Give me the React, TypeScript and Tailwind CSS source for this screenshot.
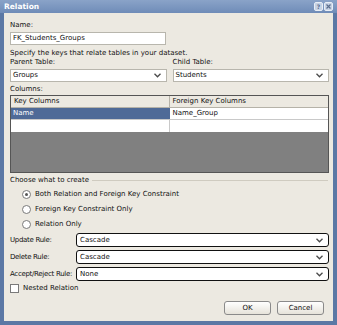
import React from 'react';

const Chevron = () => (
  <svg width="7" height="5" viewBox="0 0 7 5" className="shrink-0">
    <path d="M0.5 0.8 L3.5 3.8 L6.5 0.8" fill="none" stroke="#4a4a4a" strokeWidth="1.3" />
  </svg>
);

const Select = ({ value, className }: { value: string; className: string }) => (
  <div className={`flex items-center justify-between bg-white border border-[#b8b6ad] pl-[2px] pr-[5px] ${className}`}>
    <span>{value}</span>
    <Chevron />
  </div>
);

const RuleSelect = ({ value }: { value: string }) => (
  <div className="flex-1 h-[14px] flex items-center justify-between bg-white border border-[#111] rounded-[3px] pl-[3px] pr-[5px]">
    <span>{value}</span>
    <Chevron />
  </div>
);

const Radio = ({ label, checked }: { label: string; checked?: boolean }) => (
  <div className="flex items-center gap-[4px] h-[15px] pl-[12px]">
    <div className="w-[9px] h-[9px] rounded-full border border-[#7a7a7a] bg-white flex items-center justify-center">
      {checked && <div className="w-[3px] h-[3px] rounded-full bg-[#555]" />}
    </div>
    <span>{label}</span>
  </div>
);

const App = () => {
  return (
    <div
      className="w-[337px] h-[325px] flex flex-col bg-[#5b78a5] text-[7px] leading-none text-[#111]"
      style={{ fontFamily: '"DejaVu Sans", "Liberation Sans", sans-serif' }}
    >
      {/* Title bar */}
      <div className="h-[13px] flex items-center justify-between px-[4px] bg-gradient-to-b from-[#8aa3c8] to-[#6f8cb8]">
        <span className="text-white font-bold text-[7.5px]">Relation</span>
        <div className="flex gap-[1px]">
          <div className="w-[9px] h-[9px] rounded-[2px] bg-[#c6d2e4] border border-[#e8eef6] flex items-center justify-center font-bold text-[6px] text-[#5c6f8f]">?</div>
          <div className="w-[9px] h-[9px] rounded-[2px] bg-[#c6d2e4] border border-[#e8eef6] flex items-center justify-center">
            <svg width="5" height="5" viewBox="0 0 5 5">
              <path d="M0.5 0.5 L4.5 4.5 M4.5 0.5 L0.5 4.5" stroke="#5c6f8f" strokeWidth="1.2" />
            </svg>
          </div>
        </div>
      </div>

      {/* Body */}
      <div className="flex-1 ml-[4px] mr-[4px] mb-[4px] bg-[#ece9e1] pl-[6px] pr-[4px] pt-[9px] flex flex-col">
        <div className="mb-[3px]">Name:</div>
        <div className="w-[156px] h-[13px] bg-white border border-[#b8b6ad] flex items-center pl-[2px]">FK_Students_Groups</div>

        <div className="mt-[5px]">Specify the keys that relate tables in your dataset.</div>
        <div className="flex gap-[6px] mt-[2px]">
          <div className="flex-1 flex flex-col gap-[3px]">
            <span>Parent Table:</span>
            <Select value="Groups" className="h-[13px]" />
          </div>
          <div className="flex-1 flex flex-col gap-[3px]">
            <span>Child Table:</span>
            <Select value="Students" className="h-[13px]" />
          </div>
        </div>

        <div className="mt-[4px] mb-[2px]">Columns:</div>
        <div className="h-[78px] border border-[#555] bg-[#808080] flex flex-col">
          <div className="grid grid-cols-2 h-[12px] bg-[#ece9e1] border-b border-[#b5b2a8]">
            <div className="flex items-center pl-[3px] border-r border-[#b5b2a8]">Key Columns</div>
            <div className="flex items-center pl-[3px]">Foreign Key Columns</div>
          </div>
          <div className="grid grid-cols-2 h-[12px] bg-white border-b border-[#c9c9c9]">
            <div className="flex items-center pl-[2px] bg-[#4f6a97] text-white">Name</div>
            <div className="flex items-center pl-[3px]">Name_Group</div>
          </div>
          <div className="grid grid-cols-2 h-[12px] bg-white">
            <div className="border-r border-[#c9c9c9]" />
            <div />
          </div>
        </div>

        <div className="flex items-center gap-[3px] mt-[4px] pr-[1px]">
          <span>Choose what to create</span>
          <div className="flex-1 border-t border-[#cfcbc0]" />
        </div>
        <div className="flex flex-col mt-[3px]">
          <Radio label="Both Relation and Foreign Key Constraint" checked />
          <Radio label="Foreign Key Constraint Only" />
          <Radio label="Relation Only" />
        </div>

        <div className="flex flex-col gap-[3px] mt-[1px]">
          {[
            ['Update Rule:', 'Cascade'],
            ['Delete Rule:', 'Cascade'],
            ['Accept/Reject Rule:', 'None'],
          ].map(([label, value]) => (
            <div key={label} className="flex items-center">
              <span className="w-[66px] whitespace-nowrap tracking-[-0.3px]">{label}</span>
              <RuleSelect value={value} />
            </div>
          ))}
        </div>

        <div className="flex items-center gap-[4px] mt-[3px]">
          <div className="w-[9px] h-[9px] border border-[#7a7a7a] bg-white" />
          <span>Nested Relation</span>
        </div>

        <div className="flex justify-end gap-[6px] mt-[8px] pr-[5px]">
          <div className="w-[47px] h-[14px] rounded-[3px] border border-[#8a8a8a] bg-gradient-to-b from-white to-[#e6e3da] flex items-center justify-center">OK</div>
          <div className="w-[47px] h-[14px] rounded-[3px] border border-[#8a8a8a] bg-gradient-to-b from-white to-[#e6e3da] flex items-center justify-center">Cancel</div>
        </div>
      </div>
    </div>
  );
};

export default App;
